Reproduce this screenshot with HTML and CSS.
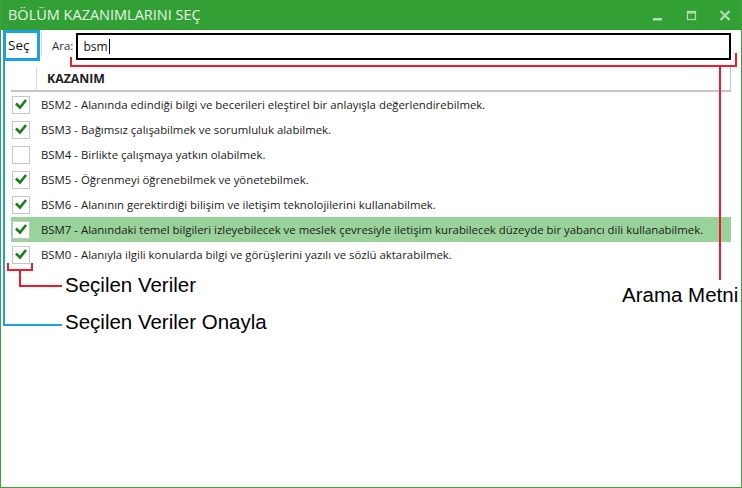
FILE: index.html
```html
<!DOCTYPE html>
<html lang="tr">
<head>
<meta charset="utf-8">
<title>Bölüm Kazanımlarını Seç</title>
<link rel="stylesheet" href="styles.css">
</head>
<body>
<div class="window">
  <div class="titlebar">
    <span class="title">BÖLÜM KAZANIMLARINI SEÇ</span>
    <div class="controls">
      <span class="ctl"><svg width="34" height="30" viewBox="0 0 34 30"><rect x="13" y="18" width="9" height="2.5" fill="#b3deb3"/></svg></span>
      <span class="ctl"><svg width="34" height="30" viewBox="0 0 34 30"><rect x="13.5" y="11.5" width="8" height="8" fill="none" stroke="#b3deb3" stroke-width="1.2"/><rect x="13" y="11" width="9" height="2.5" fill="#b3deb3"/></svg></span>
      <span class="ctl"><svg width="34" height="30" viewBox="0 0 34 30"><path d="M12.5 11 L21.5 20 M21.5 11 L12.5 20" stroke="#b3deb3" stroke-width="2.2"/></svg></span>
    </div>
  </div>
  <div class="toolbar">
    <div class="sec-btn">Seç</div>
    <div class="sep"></div>
    <span class="ara">Ara:</span>
    <div class="search"><span class="search-text">bsm</span><span class="caret"></span></div>
  </div>
  <div class="grid">
    <div class="grid-head">
      <div class="head-check"></div>
      <div class="head-name">KAZANIM</div>
    </div>
    <div class="row"><span class="cb on"><svg width="16" height="16" viewBox="0 0 16 16"><path d="M3 6.5 L7 10.5 L13 3" fill="none" stroke="#1c7d1c" stroke-width="2.6"/></svg></span><span class="txt">BSM2 - Alanında edindiği bilgi ve becerileri eleştirel bir anlayışla değerlendirebilmek.</span></div>
    <div class="row"><span class="cb on"><svg width="16" height="16" viewBox="0 0 16 16"><path d="M3 6.5 L7 10.5 L13 3" fill="none" stroke="#1c7d1c" stroke-width="2.6"/></svg></span><span class="txt">BSM3 - Bağımsız çalışabilmek ve sorumluluk alabilmek.</span></div>
    <div class="row"><span class="cb"></span><span class="txt">BSM4 - Birlikte çalışmaya yatkın olabilmek.</span></div>
    <div class="row"><span class="cb on"><svg width="16" height="16" viewBox="0 0 16 16"><path d="M3 6.5 L7 10.5 L13 3" fill="none" stroke="#1c7d1c" stroke-width="2.6"/></svg></span><span class="txt">BSM5 - Öğrenmeyi öğrenebilmek ve yönetebilmek.</span></div>
    <div class="row"><span class="cb on"><svg width="16" height="16" viewBox="0 0 16 16"><path d="M3 6.5 L7 10.5 L13 3" fill="none" stroke="#1c7d1c" stroke-width="2.6"/></svg></span><span class="txt">BSM6 - Alanının gerektirdiği bilişim ve iletişim teknolojilerini kullanabilmek.</span></div>
    <div class="row selected"><span class="cb on"><svg width="16" height="16" viewBox="0 0 16 16"><path d="M3 6.5 L7 10.5 L13 3" fill="none" stroke="#1c7d1c" stroke-width="2.6"/></svg></span><span class="txt">BSM7 - Alanındaki temel bilgileri izleyebilecek ve meslek çevresiyle iletişim kurabilecek düzeyde bir yabancı dili kullanabilmek.</span></div>
    <div class="row"><span class="cb on"><svg width="16" height="16" viewBox="0 0 16 16"><path d="M3 6.5 L7 10.5 L13 3" fill="none" stroke="#1c7d1c" stroke-width="2.6"/></svg></span><span class="txt">BSM0 - Alanıyla ilgili konularda bilgi ve görüşlerini yazılı ve sözlü aktarabilmek.</span></div>
  </div>

  <svg class="annot" width="742" height="488" viewBox="0 0 742 488">
    <path d="M4 61 V325 H62" fill="none" stroke="#1ba1e2" stroke-width="2"/>
    <path d="M8 263 V270 H32 V263 M20 270 V286 H62" fill="none" stroke="#ec1c2a" stroke-width="2"/>
    <path d="M71 57 V66 H736 V53 M720 66 V280" fill="none" stroke="#ec1c2a" stroke-width="2"/>
  </svg>
  <div class="note note-secilen">Seçilen Veriler</div>
  <div class="note note-onayla">Seçilen Veriler Onayla</div>
  <div class="note note-arama">Arama Metni</div>
</div>
</body>
</html>
```
FILE: styles.css
```css
html, body {
  margin: 0;
  padding: 0;
  background: #ffffff;
}

.window {
  position: relative;
  width: 742px;
  height: 488px;
  box-sizing: border-box;
  border: 1px solid #3f9f41;
  border-top: 0;
  background: #ffffff;
  font-family: "Open Sans", "Noto Sans", sans-serif;
  overflow: hidden;
}

.titlebar {
  display: flex;
  align-items: center;
  height: 30px;
  margin: 0 -1px;
  background: #33a036;
}

.title {
  flex: 1;
  padding-left: 8px;
  color: #e6f4e6;
  font-size: 14.5px;
  line-height: 30px;
  letter-spacing: 0;
}

.controls {
  display: flex;
}

.ctl {
  display: block;
  width: 34px;
  height: 30px;
}

.ctl svg {
  display: block;
}

.toolbar {
  display: flex;
  align-items: flex-start;
  height: 33px;
}

.sec-btn {
  box-sizing: border-box;
  width: 37px;
  height: 31px;
  margin-left: 2px;
  border: 3px solid #1ba1e2;
  font-size: 13.5px;
  line-height: 25px;
  padding-left: 2px;
  color: #111111;
}

.sep {
  width: 1px;
  height: 22px;
  margin-top: 3px;
  margin-left: 1px;
  background: #d4d4d4;
}

.ara {
  margin-left: 10px;
  margin-top: 9px;
  font-size: 11.5px;
  line-height: 14px;
  color: #333333;
}

.search {
  display: flex;
  align-items: center;
  box-sizing: border-box;
  width: 655px;
  height: 27px;
  margin-top: 3px;
  margin-left: 3px;
  border: 2px solid #000000;
  padding-left: 5px;
}

.search-text {
  font-size: 12px;
  color: #111111;
}

.caret {
  display: block;
  width: 1px;
  height: 15px;
  margin-left: 1px;
  background: #000000;
}

.grid {
  margin: 4px 10px 0 10px;
}

.grid-head {
  display: flex;
  height: 23px;
  border-bottom: 2px solid #c4c4c4;
  border-right: 1px solid #c4c4c4;
}

.head-check {
  width: 25px;
  border-right: 1px solid #dadada;
}

.head-name {
  padding-left: 10px;
  font-size: 12.3px;
  font-weight: 700;
  line-height: 23px;
  color: #222222;
}

.row {
  display: flex;
  align-items: center;
  height: 25px;
}

.row.selected {
  background: #9ad29b;
}

.cb {
  display: flex;
  align-items: center;
  justify-content: center;
  box-sizing: border-box;
  width: 18px;
  height: 18px;
  margin-left: 1px;
  border: 1px solid #c8c8c8;
  background: #ffffff;
}

.cb svg {
  display: block;
}

.txt {
  margin-left: 11px;
  font-size: 11.4px;
  color: #1a1a1a;
  white-space: nowrap;
}

.annot {
  position: absolute;
  left: -1px;
  top: 0;
  pointer-events: none;
}

.note {
  position: absolute;
  font-family: "Liberation Sans", Arial, sans-serif;
  font-size: 20.5px;
  line-height: 20px;
  color: #000000;
  white-space: nowrap;
}

.note-secilen {
  left: 64px;
  top: 275px;
}

.note-onayla {
  left: 64px;
  top: 312px;
}

.note-arama {
  left: 621px;
  top: 285px;
}
```
